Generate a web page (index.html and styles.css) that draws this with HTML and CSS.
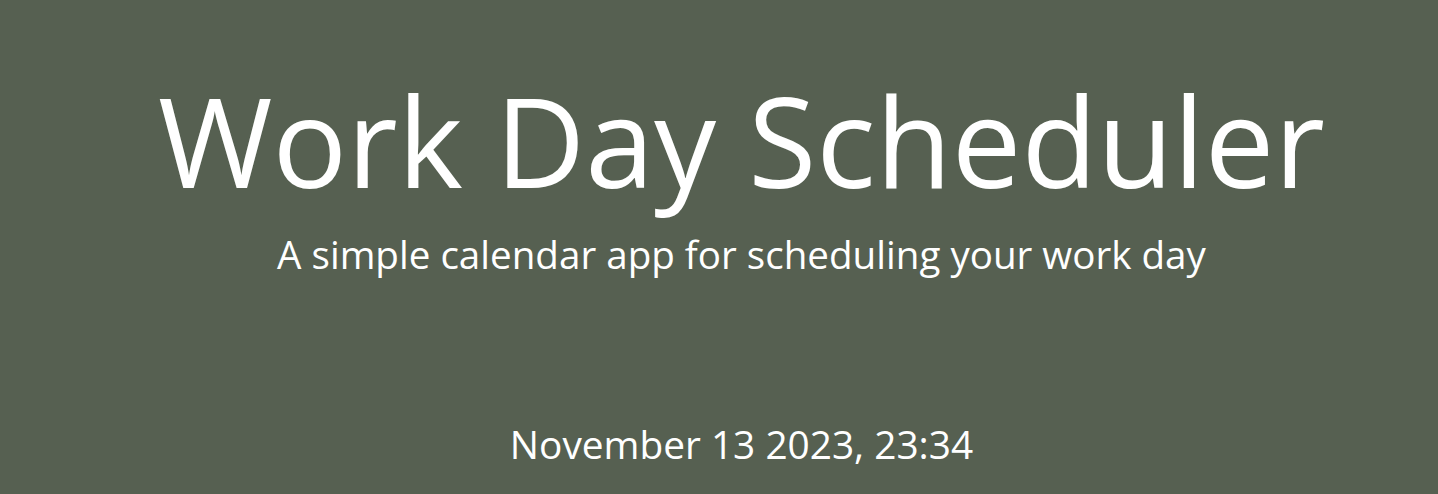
FILE: index.html
```html
<!DOCTYPE html>
<html lang="en">
<head>
<meta charset="utf-8">
<title>Work Day Scheduler</title>
<link rel="stylesheet" href="styles.css">
</head>
<body>
<header class="hero">
  <h1 class="title">Work Day Scheduler</h1>
  <p class="lead">A simple calendar app for scheduling your work day</p>
  <p class="today">November 13 2023, 23:34</p>
</header>
</body>
</html>
```
FILE: styles.css
```css
html, body {
  margin: 0;
  padding: 0;
  background: #566051;
  height: 100%;
}
body {
  font-family: "Open Sans", "Noto Sans", sans-serif;
  color: #ffffff;
  overflow: hidden;
}
.hero {
  display: flex;
  flex-direction: column;
  align-items: center;
  padding: 75px 0 0 45px;
}
.title {
  margin: 0;
  font-weight: 400;
  font-size: 124px;
  line-height: 130px;
}
.lead {
  margin: 24px 0 0;
  font-size: 38.6px;
  line-height: 50px;
}
.today {
  margin: 140px 0 0;
  font-size: 38.8px;
  line-height: 50px;
}
```
